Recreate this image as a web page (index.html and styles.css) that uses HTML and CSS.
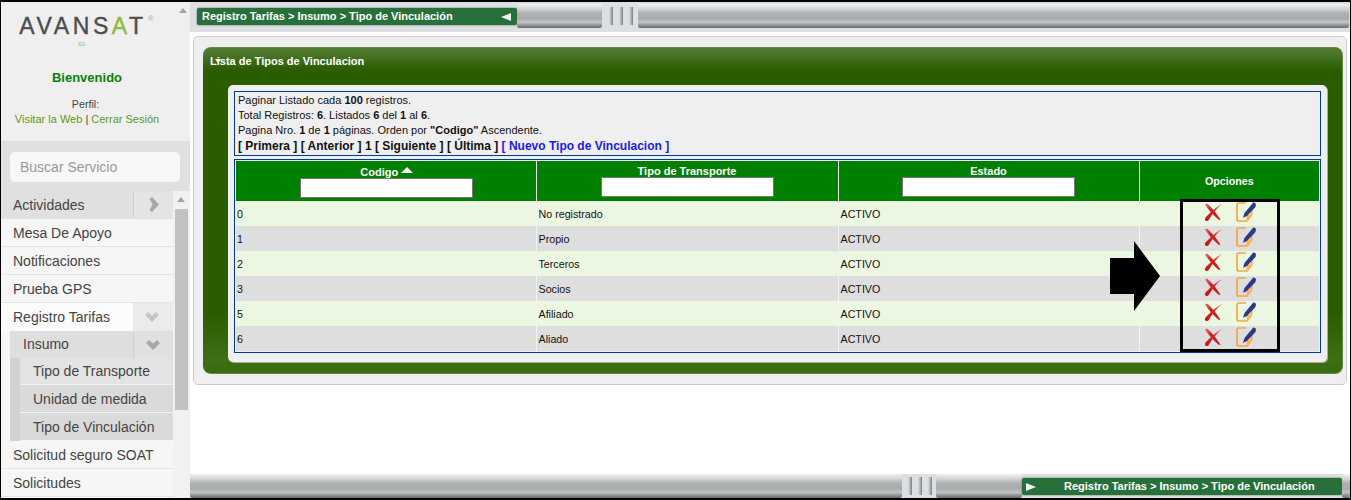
FILE: index.html
```html
<!DOCTYPE html>
<html lang="es">
<head>
<meta charset="utf-8">
<title>Tipo de Vinculación</title>
<link rel="stylesheet" href="styles.css">
</head>
<body>
<svg class="defs" width="0" height="0">
  <defs>
    <linearGradient id="xg" x1="1" y1="0" x2="0" y2="1"><stop offset="0" stop-color="#e6b8b8"/><stop offset=".4" stop-color="#d42a2a"/><stop offset="1" stop-color="#c41414"/></linearGradient>
    <linearGradient id="xh" x1="0" y1="0" x2="1" y2="1"><stop offset="0" stop-color="#dc7a7a"/><stop offset=".4" stop-color="#cc1c1c"/><stop offset="1" stop-color="#cc2020"/></linearGradient>
    <symbol id="ico-del" viewBox="0 0 20 20">
      <path d="M2 2.500 4 1.500C8 5 12 9.500 17.500 17.500L16 18C11 14 6 8.500 2 2.500z" fill="url(#xh)"/>
      <path d="M20 1.500C14.500 5.500 10 11 6 17.500 5 19.500 2.800 19.500 2 18 1.500 16.500 2.500 15.500 4 14 8.500 9.500 13.500 4.500 20 1.500z" fill="url(#xg)"/>
    </symbol>
    <symbol id="ico-edit" viewBox="0 0 20 20">
      <path d="M10 1H3Q1 1 1 3v14q0 2 2 2h8l4.500-6V8" fill="none" stroke="#f9a53c" stroke-width="1.700"/>
      <path d="M10.500 19.500v-5q0-2 2-2h4z" fill="#f9b860"/>
      <path d="M17.500.3 20 1.800 19.500 5 11 14 7 15.800 8.500 11z" fill="#2c3a84"/>
    </symbol>
  </defs>
</svg>
<div class="app">
  <aside class="side">
    <div class="side-top">
      <div class="brand">
        <div class="logo">AVANS<span class="logo-a">A</span>T<sup class="logo-r">®</sup></div>
        <div class="logo-gl">GL</div>
        <h1 class="welcome">Bienvenido</h1>
        <p class="profile">Perfil:</p>
        <p class="links"><a>Visitar la Web</a> <span class="pipe">|</span> <a>Cerrar Sesión</a></p>
      </div>
      <div class="brand-scroll"><span class="arrow-up"></span></div>
    </div>
    <div class="search-band"><div class="search">Buscar Servicio</div></div>
    <div class="menu-wrap">
      <nav class="menu">
        <div class="item active"><span class="label">Actividades</span><span class="exp"><svg width="10" height="15" viewBox="0 0 10 15"><path d="M3 0l7 7.500L3 15 .5 13l3-5.500L.5 2z" fill="#a8a8a8"/></svg></span></div>
        <div class="item"><span class="label">Mesa De Apoyo</span></div>
        <div class="item"><span class="label">Notificaciones</span></div>
        <div class="item"><span class="label">Prueba GPS</span></div>
        <div class="item open"><span class="label">Registro Tarifas</span><span class="exp"><svg width="14" height="10" viewBox="0 0 14 10"><path d="M0 3l3-3 4 3.500L11 0l3 3-7 7z" fill="#c4c4c4"/></svg></span></div>
        <div class="item sub"><span class="label">Insumo</span><span class="exp"><svg width="14" height="10" viewBox="0 0 14 10"><path d="M0 3l3-3 4 3.500L11 0l3 3-7 7z" fill="#a8a8a8"/></svg></span></div>
        <div class="subgroup">
          <div class="item leaf first"><span class="label">Tipo de Transporte</span></div>
          <div class="item leaf"><span class="label">Unidad de medida</span></div>
          <div class="item leaf"><span class="label">Tipo de Vinculación</span></div>
        </div>
        <div class="item"><span class="label">Solicitud seguro SOAT</span></div>
        <div class="item"><span class="label">Solicitudes</span></div>
      </nav>
      <div class="menu-scroll"><span class="arrow-up"></span><div class="thumb"></div></div>
    </div>
  </aside>
  <main class="main">
    <div class="bar bar-top">
      <div class="crumb"><span>Registro Tarifas &gt; Insumo &gt; Tipo de Vinculación</span><i class="tri-left"></i></div>
      <div class="metal short"></div>
      <div class="grip"><i></i><i></i><i></i></div>
      <div class="metal"></div>
    </div>
    <div class="content">
      <section class="panel">
        <div class="green">
          <h2 class="title">Lista de Tipos de Vinculacion<i class="tick"></i></h2>
          <div class="inner">
            <div class="info">
              <p>Paginar Listado cada <b>100</b> registros.</p>
              <p>Total Registros: <b>6</b>. Listados <b>6</b> del <b>1</b> al <b>6</b>.</p>
              <p>Pagina Nro. <b>1</b> de <b>1</b> páginas. Orden por <b>"Codigo"</b> Ascendente.</p>
              <p class="pager">[ Primera ] [ Anterior ] 1 [ Siguiente ] [ Última ] <a>[ Nuevo Tipo de Vinculacion ]</a></p>
            </div>
            <div class="table-box">
              <table class="grid">
                <colgroup><col class="c1"><col class="c2"><col class="c3"><col class="c4"></colgroup>
                <thead>
                  <tr>
                    <th><span class="th-t low">Codigo <i class="sort"></i></span><span class="fake-input"></span></th>
                    <th><span class="th-t">Tipo de Transporte</span><span class="fake-input"></span></th>
                    <th><span class="th-t">Estado</span><span class="fake-input"></span></th>
                    <th>Opciones</th>
                  </tr>
                </thead>
                <tbody>
                  <tr><td>0</td><td>No registrado</td><td>ACTIVO</td><td class="ops"><svg class="ic"><use href="#ico-del"/></svg><svg class="ic"><use href="#ico-edit"/></svg></td></tr>
                  <tr><td>1</td><td>Propio</td><td>ACTIVO</td><td class="ops"><svg class="ic"><use href="#ico-del"/></svg><svg class="ic"><use href="#ico-edit"/></svg></td></tr>
                  <tr><td>2</td><td>Terceros</td><td>ACTIVO</td><td class="ops"><svg class="ic"><use href="#ico-del"/></svg><svg class="ic"><use href="#ico-edit"/></svg></td></tr>
                  <tr><td>3</td><td>Socios</td><td>ACTIVO</td><td class="ops"><svg class="ic"><use href="#ico-del"/></svg><svg class="ic"><use href="#ico-edit"/></svg></td></tr>
                  <tr><td>5</td><td>Afiliado</td><td>ACTIVO</td><td class="ops"><svg class="ic"><use href="#ico-del"/></svg><svg class="ic"><use href="#ico-edit"/></svg></td></tr>
                  <tr><td>6</td><td>Aliado</td><td>ACTIVO</td><td class="ops"><svg class="ic"><use href="#ico-del"/></svg><svg class="ic"><use href="#ico-edit"/></svg></td></tr>
                </tbody>
              </table>
            </div>
          </div>
        </div>
      </section>
      <div class="mark-box"></div>
      <svg class="mark-arrow" width="50" height="70" viewBox="0 0 50 70"><path d="M0 17h24V0l26 35-26 35V53H0z" fill="#000"/></svg>
    </div>
    <div class="bar bar-bottom">
      <div class="metal"></div>
      <div class="grip"><i></i><i></i><i></i></div>
      <div class="metal mid"></div>
      <div class="crumb crumb-b"><i class="tri-right"></i><span>Registro Tarifas &gt; Insumo &gt; Tipo de Vinculación</span></div>
      <div class="metal tail"></div>
    </div>
  </main>
</div>
</body>
</html>
```
FILE: styles.css
```css
* { box-sizing: border-box; }
html, body { margin: 0; padding: 0; }
body { font-family: "Liberation Sans", Arial, sans-serif; background: #fff; overflow: hidden; }
p, h1, h2 { margin: 0; }
.defs { position: absolute; }

.app {
  width: 1351px; height: 500px;
  border: solid #000; border-width: 2px 1px 2px 1px;
  display: grid; grid-template-columns: 189px 1fr;
  overflow: hidden;
}

/* sidebar */
.side { display: flex; flex-direction: column; background: #e0e0e0; height: 496px; }
.side-top { display: flex; height: 139px; }
.brand { width: 172px; background: #efefef; text-align: center; padding-top: 11px; }
.brand-scroll { flex: 1; background: #efefef; padding: 6px 0 0 6px; }
.logo { height: 26px; font-size: 23px; line-height: 26px; color: #4b4d50; letter-spacing: 3.600px; font-weight: 400; padding-right: 8px; white-space: nowrap; position: relative; -webkit-text-stroke: .4px #4b4d50; }
.logo-a { color: #8dbb3c; -webkit-text-stroke: .4px #8dbb3c; }
.logo-r { position: absolute; font-size: 8px; line-height: 10px; color: #aaa; top: 1px; margin-left: 1px; letter-spacing: 0; -webkit-text-stroke: 0; }
.logo-gl { font-size: 6px; font-weight: 700; color: #a4cc70; line-height: 6px; height: 6px; margin-top: 2px; margin-bottom: 23px; padding-right: 9px; }
.welcome { font-size: 13px; line-height: 15px; color: #0a820a; font-weight: 700; margin-bottom: 12px; }
.profile { font-size: 10.700px; line-height: 14px; color: #444; margin-bottom: 1px; padding-right: 3px; }
.links { font-size: 11px; line-height: 15px; color: #5d9a12; }
.pipe { color: #444; }

.search-band { height: 50px; padding: 11px 9px 9px 9px; }
.search { height: 30px; width: 170px; border-radius: 5px; background: #f8f8f8; color: #9a9a9a; font-size: 14px; line-height: 30px; padding-left: 10px; }

.menu-wrap { display: flex; height: 307px; }
.menu { width: 172px; background: #f7f7f7; }
.item { height: 28px; display: flex; align-items: center; justify-content: space-between; font-size: 14px; color: #444; padding-left: 12px; border-bottom: 1px solid #e4e4e4; background: #f6f6f6; }
.item.active { background: #e0e0e0; border-bottom-color: #e0e0e0; }
.item.open { background: #fbfbfb; border-bottom: 0; }
.exp { width: 40px; height: 27px; display: flex; align-items: center; justify-content: center; flex: none; border-left: 1px solid #cfcfcf; }
.item.active .exp { background: #e4e4e4; }
.item.open .exp { background: #ebebeb; border-left: 0; height: 28px; padding-right: 2px; }
.item.sub { margin-left: 9px; background: #dedede; padding-left: 13px; height: 27px; border-bottom: 0; }
.item.sub .label { padding-bottom: 1px; }
.item.sub .exp { background: #e0e0e0; padding-right: 2px; }
.subgroup { margin-left: 9px; border-left: 10px solid #d2d2d2; }
.item.leaf { padding-left: 13px; background: #dadada; border-bottom: 1px solid #f2f2f2; }
.item.leaf.first { background: #e3e3e3; height: 27px; }
.menu-scroll { flex: 1; background: #f1f1f1; padding-left: 2px; position: relative; }
.arrow-up { display: block; width: 0; height: 0; margin: 6px 0 0 2px; border: 4px solid transparent; border-top: 0; border-bottom: 5px solid #a3a3a3; }
.brand-scroll .arrow-up { margin: 0; }
.thumb { position: absolute; left: 2px; top: 18px; width: 13px; height: 201px; background: #c1c1c1; }

/* main column */
.main { display: flex; flex-direction: column; height: 496px; min-width: 0; }
.bar { display: flex; background: #dde0e3; flex: none; }
.bar-top { height: 30px; padding: 2px 1px 4px 7px; }
.bar-bottom { height: 24px; }
.metal {
  flex: 1;
  background: linear-gradient(#f1f1f1 0, #d6d8d9 18%, #aeb1b3 38%, #a9abad 62%, #c3c5c7 76%, #858585 92%, #6a6a6a 100%);
  border-radius: 2px;
}
.metal.short { flex: none; width: 85px; }
.metal.mid { flex: none; width: 86px; }
.metal.tail { flex: none; width: 8px; }
.bar-bottom .metal:first-child { flex: none; width: 712px; }
.grip { width: 36px; display: flex; justify-content: center; gap: 5px; padding: 3px 0; flex: none; }
.bar-bottom .grip { width: 34px; }
.grip i { display: block; width: 5px; background: linear-gradient(90deg, #dde0e3 20%, #a5a7a9 70%, #77797b 100%); }
.crumb {
  width: 320px; height: 17px; margin-top: 4px; flex: none;
  background: #27703a; color: #fff; font-size: 11px; font-weight: 700; line-height: 17px;
  padding: 0 6px 0 5px; display: flex; justify-content: space-between; align-items: center;
  box-shadow: 0 0 2px #555; border-radius: 2px;
}
.crumb-b { justify-content: flex-start; gap: 28px; padding-left: 4px; }
.tri-left { width: 0; height: 0; border: 4px solid transparent; border-left: 0; border-right: 10px solid #f2f2f2; }
.tri-right { width: 0; height: 0; border: 4px solid transparent; border-right: 0; border-left: 10px solid #f2f2f2; }

/* content */
.content { flex: 1; position: relative; padding: 4px 3px 0 3px; min-height: 0; }
.panel { background: #efefef; border: 1px solid #ccc; border-radius: 5px; height: 349px; padding: 10px 3px 10px 9px; }
.green {
  height: 327px; border-radius: 8px; padding: 0 15px 0 25px;
  background: linear-gradient(#517b30 0, #4a7629 6px, #2a5c00 22px, #2a5c00 265px, #3f6f14 310px, #3a6a10 100%);
  border: solid #5e8c3a; border-width: 1px 1px 1px 0;
}
.title { position: relative; margin-left: -18px; height: 37px; padding-top: 7px; color: #fff; font-size: 11px; font-weight: 700; line-height: 13px; }
.tick { position: absolute; left: 5px; top: 11px; width: 0; height: 0; border: 3px solid transparent; border-top: 4px solid #fff; border-bottom: 0; }
.inner { background: #efefef; border-radius: 5px; height: 277px; padding: 6px 6px 0 6px; box-shadow: 1px 1px 0 #a9b29c; }
.info { height: 65px; border: 1px solid #003a9e; padding: 1px 3px; font-size: 11px; color: #111; line-height: 15px; }
.pager { font-size: 12px; font-weight: 700; line-height: 16px; }
.pager a { color: #1a1aee; }
.table-box { margin-top: 3px; border: 1px solid #003a9e; height: 194px; padding: 1px; }
.grid { border-collapse: collapse; table-layout: fixed; width: 100%; font-size: 10.700px; color: #111; }
.c1 { width: 300px; } .c2 { width: 302px; } .c3 { width: 301px; }
.grid th { height: 40px; background: #008000; color: #fff; font-size: 11px; font-weight: 700; border-left: 1px solid #f0f0f0; padding: 0; vertical-align: top; }
.grid th:first-child { border-left: 0; padding-left: 2px; }
.grid th:last-child { vertical-align: middle; font-size: 10.700px; }
.th-t { display: block; height: 16px; line-height: 20px; }
.th-t.low { line-height: 22px; height: 17px; }
.fake-input { display: block; width: 173px; height: 20px; margin: 0 auto; background: #fff; border: 1px solid #777; }
.sort { display: inline-block; width: 0; height: 0; border: 6px solid transparent; border-top: 0; border-bottom: 6px solid #fff; vertical-align: 3px; }
.grid td { height: 25px; padding: 0 1px 0 2px; border-left: 1px solid #f4f4f4; background: #ecf7e2; line-height: 12px; }
.grid td:first-child { border-left: 0; padding-left: 1px; }
.grid tbody tr:nth-child(even) td { background: #dedede; }
.grid td.ops { padding: 0 0 0 63px; }
.ic { width: 20px; height: 20px; display: inline-block; vertical-align: middle; margin-right: 13px; margin-top: -3px; }

/* annotation drawn over the screenshot */
.mark-box { position: absolute; left: 990px; top: 167px; width: 100px; height: 153px; border: 3px solid #000; }
.mark-arrow { position: absolute; left: 920px; top: 209px; }
```
